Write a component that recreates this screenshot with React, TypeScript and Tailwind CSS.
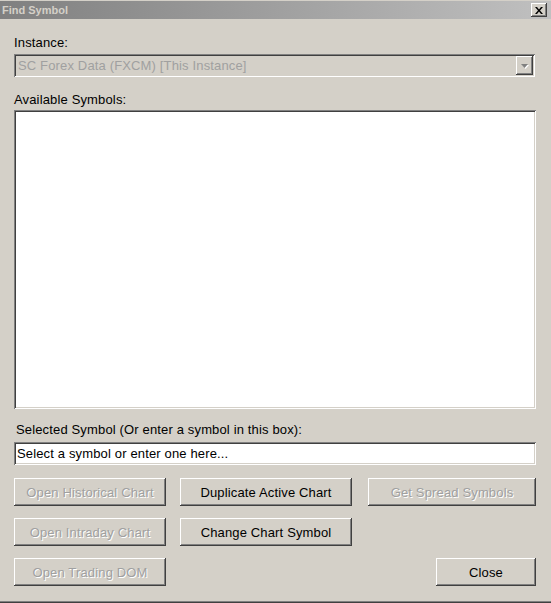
import React from 'react';

const font = { fontFamily: '"Liberation Sans", Arial, sans-serif' };

const sunken =
  'shadow-[inset_1px_1px_0_#808080,inset_-1px_-1px_0_#ffffff,inset_2px_2px_0_#404040,inset_-2px_-2px_0_#d4d0c8]';
const raised =
  'shadow-[inset_-1px_-1px_0_#404040,inset_1px_1px_0_#ffffff,inset_-2px_-2px_0_#808080,inset_2px_2px_0_#d4d0c8]';

type BtnProps = { label: string; width: string; disabled?: boolean };

const Btn: React.FC<BtnProps> = ({ label, width, disabled }) => (
  <button
    className={`${width} h-[28px] bg-[#d4d0c8] ${raised} flex items-center justify-center text-[13px] leading-[15px] tracking-[0.15px] ${
      disabled ? 'text-[#a0a0a0] [text-shadow:1px_1px_0_#ffffff]' : 'text-black'
    }`}
  >
    {label}
  </button>
);

const App: React.FC = () => {
  return (
    <div className="w-[551px] h-[603px] bg-[#d4d0c8] flex flex-col border-t border-[#d4d0c8] tracking-[0.15px]" style={font}>
      {/* title bar */}
      <div className="h-[18px] flex items-center justify-between bg-gradient-to-r from-[#808080] to-[#c0c0c0] pl-[2px] pr-[4px]">
        <span className="text-[11px] font-bold text-[#d4d0c8] leading-[13px] tracking-normal">Find Symbol</span>
        <div className={`w-[16px] h-[14px] bg-[#d4d0c8] ${raised} flex items-center justify-center`}>
          <svg width="8" height="7" viewBox="0 0 8 7">
            <path d="M0 0h2l2 2.5L6 0h2L5 3.5 8 7H6L4 4.5 2 7H0l3-3.5z" fill="#000" />
          </svg>
        </div>
      </div>

      <div className="flex-1 flex flex-col pl-[14px] pr-[15px] pt-[16px]">
        <div className="text-[13px] leading-[15px] text-black">Instance:</div>
        <div className={`mt-[4px] h-[23px] w-[521px] ${sunken} flex items-center justify-between pl-[4px] pr-[2px]`}>
          <span className="text-[13px] text-[#a0a0a0]">SC Forex Data (FXCM) [This Instance]</span>
          <div className={`w-[17px] h-[19px] ${raised} flex items-center justify-center`}>
            <svg width="9" height="6" viewBox="0 0 9 6">
              <path d="M1 1h7L4.5 5z" fill="#ffffff" transform="translate(1 1)" />
              <path d="M1 1h7L4.5 5z" fill="#808080" />
            </svg>
          </div>
        </div>

        <div className="mt-[15px] text-[13px] leading-[15px] text-black">Available Symbols:</div>
        <div className={`mt-[3px] h-[299px] w-[522px] bg-white ${sunken}`} />

        <div className="mt-[13px] pl-[2px] text-[13px] leading-[15px] text-black">
          Selected Symbol (Or enter a symbol in this box):
        </div>
        <div className={`mt-[5px] h-[23px] w-[522px] bg-white ${sunken} flex items-center pl-[3px]`}>
          <span className="text-[13px] text-black">Select a symbol or enter one here...</span>
        </div>

        <div className="mt-[13px] flex flex-col gap-[12px]">
          <div className="flex">
            <Btn label="Open Historical Chart" width="w-[152px]" disabled />
            <div className="ml-[14px]">
              <Btn label="Duplicate Active Chart" width="w-[172px]" />
            </div>
            <div className="ml-[16px]">
              <Btn label="Get Spread Symbols" width="w-[168px]" disabled />
            </div>
          </div>
          <div className="flex">
            <Btn label="Open Intraday Chart" width="w-[152px]" disabled />
            <div className="ml-[14px]">
              <Btn label="Change Chart Symbol" width="w-[172px]" />
            </div>
          </div>
          <div className="flex justify-between w-[522px]">
            <Btn label="Open Trading DOM" width="w-[152px]" disabled />
            <Btn label="Close" width="w-[100px]" />
          </div>
        </div>
      </div>

      <div className="h-[2px] border-t border-[#808080] bg-[#404040]" />
    </div>
  );
};

export default App;
